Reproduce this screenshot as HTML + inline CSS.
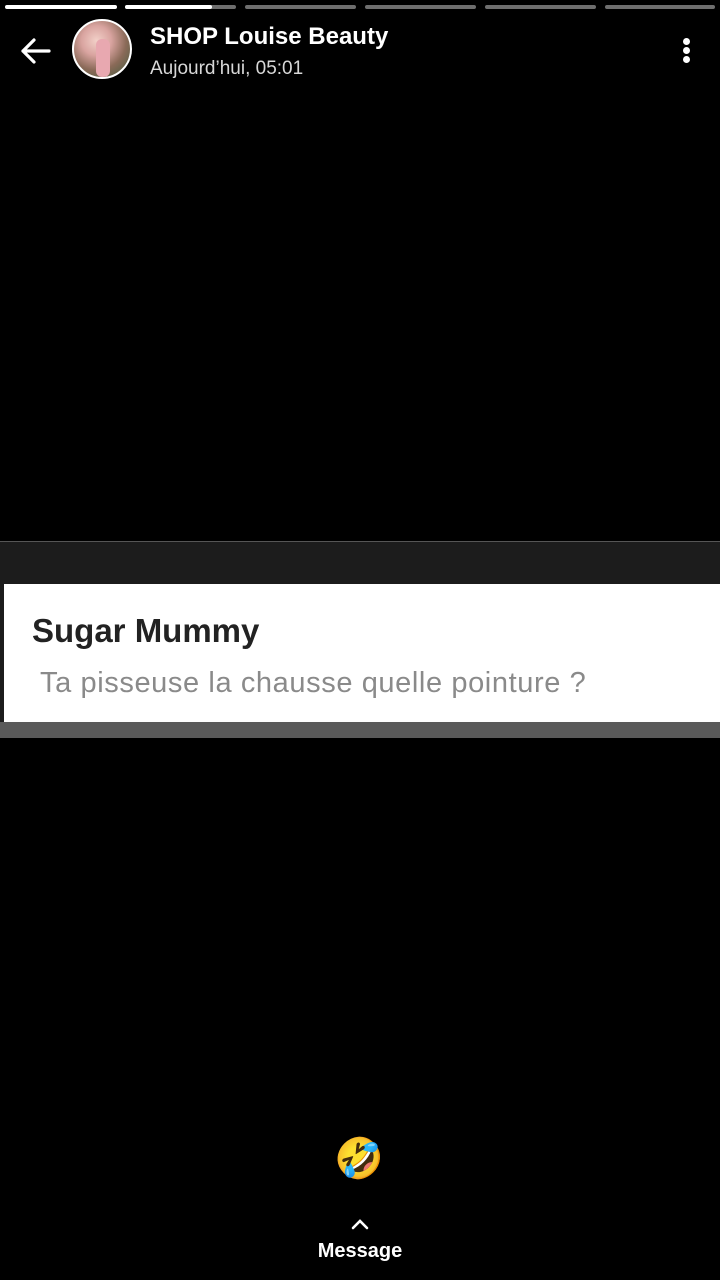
<!DOCTYPE html>
<html><head><meta charset="utf-8"><style>
html,body{margin:0;padding:0;background:#000;width:720px;height:1280px;overflow:hidden;font-family:"Liberation Sans",sans-serif;position:relative}
.bar{position:absolute;top:5px;height:4px;border-radius:2px;background:#6e6e6e}
.w{background:#fff}
.abs{position:absolute}
</style></head><body>
<div class="bar w" style="left:5px;width:112px"></div>
<div class="bar" style="left:125px;width:111px"></div>
<div class="bar w" style="left:125px;width:87px"></div>
<div class="bar" style="left:245px;width:111px"></div>
<div class="bar" style="left:365px;width:111px"></div>
<div class="bar" style="left:485px;width:111px"></div>
<div class="bar" style="left:605px;width:110px"></div>

<svg class="abs" style="left:18px;top:34px" width="34" height="34" viewBox="0 0 34 34"><path d="M31 17H5M16 6L5 17l11 11" stroke="#fff" stroke-width="3.2" fill="none" stroke-linecap="round" stroke-linejoin="round"/></svg>
<div class="abs" style="left:72px;top:19px;width:56px;height:56px;border-radius:50%;border:2px solid #fff;background:radial-gradient(circle at 40% 35%,#f2d0c8 0,#d9a4a0 30%,#8a6a58 60%,#3e5a3a 100%);overflow:hidden"><div style="position:absolute;left:22px;top:18px;width:14px;height:38px;background:#e8a8b0;border-radius:6px"></div></div>
<div class="abs" style="left:150px;top:23px;color:#fff;font-size:24px;font-weight:bold">SHOP Louise Beauty</div>
<div class="abs" style="left:150px;top:58px;color:#d8d8d8;font-size:19px">Aujourd’hui, 05:01</div>
<div class="abs" style="left:683px;top:38px;width:7px;height:7px;border-radius:50%;background:#fff"></div>
<div class="abs" style="left:683px;top:47px;width:7px;height:7px;border-radius:50%;background:#fff"></div>
<div class="abs" style="left:683px;top:56px;width:7px;height:7px;border-radius:50%;background:#fff"></div>

<div class="abs" style="left:0;top:541px;width:720px;height:1px;background:#555"></div>
<div class="abs" style="left:0;top:542px;width:720px;height:42px;background:#1c1c1c"></div>
<div class="abs" style="left:0;top:584px;width:720px;height:138px;background:#fff"></div>
<div class="abs" style="left:0;top:584px;width:4px;height:154px;background:#1c1c1c"></div>
<div class="abs" style="left:0;top:722px;width:720px;height:16px;background:#5a5a5a"></div>
<div class="abs" style="left:32px;top:612px;color:#222;font-size:33px;font-weight:bold;letter-spacing:0">Sugar Mummy</div>
<div class="abs" style="left:40px;top:667px;color:#8a8a8a;font-size:29px;letter-spacing:0.6px">Ta pisseuse la chausse quelle pointure ?</div>

<div class="abs" style="left:334px;top:1134px;font-size:40px;line-height:50px;font-family:'Noto Color Emoji',sans-serif">🤣</div>
<svg class="abs" style="left:350px;top:1217px" width="20" height="14" viewBox="0 0 20 14"><path d="M3 11l7-7 7 7" stroke="#fff" stroke-width="2.6" fill="none" stroke-linecap="round"/></svg>
<div class="abs" style="left:0;width:720px;top:1240px;text-align:center;color:#fff;font-size:20px;font-weight:bold">Message</div>
</body></html>
